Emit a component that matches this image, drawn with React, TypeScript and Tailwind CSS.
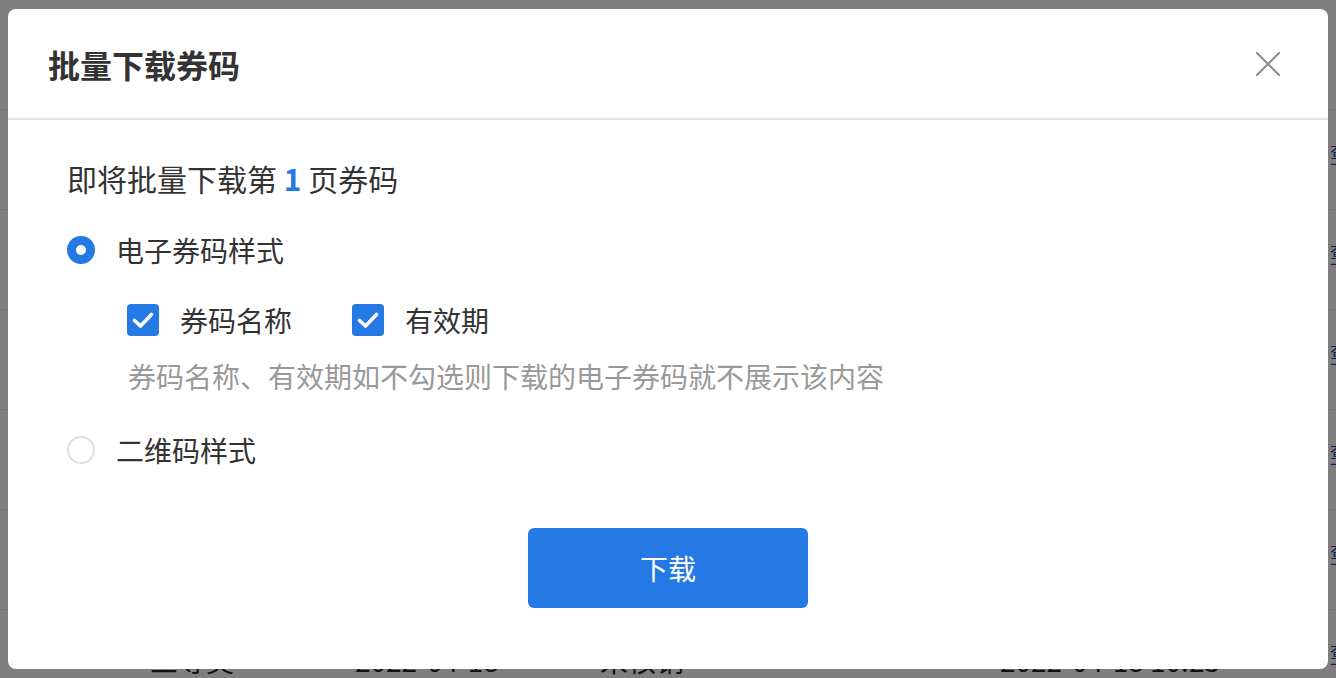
import React from "react";

const font = { fontFamily: '"Noto Sans CJK SC", "Noto Sans", sans-serif' };

function Row({ a, b, c, d }: { a: string; b: string; c: string; d: string }) {
  return (
    <div className="h-[100px] border-b border-[#e8e8e8] flex items-center text-[28px] text-[#222] whitespace-nowrap">
      <div className="w-[150px] shrink-0" />
      <div className="w-[205px] shrink-0">{a}</div>
      <div className="w-[245px] shrink-0">{b}</div>
      <div className="w-[400px] shrink-0">{c}</div>
      <div className="w-[330px] shrink-0">{d}</div>
      <div className="flex flex-col text-[#1f4fa0] text-[16px] leading-[18px] shrink-0">
        <span>查看</span>
        <span>下载</span>
      </div>
    </div>
  );
}

function Radio({ checked }: { checked: boolean }) {
  return checked ? (
    <div className="w-[28px] h-[28px] rounded-full bg-[#2579e4] flex items-center justify-center">
      <div className="w-[10px] h-[10px] rounded-full bg-white" />
    </div>
  ) : (
    <div className="w-[28px] h-[28px] rounded-full border-2 border-[#dcdfe6] bg-white" />
  );
}

function Checkbox() {
  return (
    <div className="w-[32px] h-[32px] rounded-[4px] bg-[#2579e4] flex items-center justify-center">
      <svg width="24" height="24" viewBox="0 0 24 24" fill="none">
        <path d="M3.5 12.5 L9.5 18 L20.5 6.5" stroke="white" strokeWidth="3.6" strokeLinecap="round" strokeLinejoin="round" />
      </svg>
    </div>
  );
}

export default function App() {
  return (
    <div className="relative w-[1336px] h-[678px] overflow-hidden bg-white" style={font}>
      <div className="flex flex-col">
        <div className="h-[110px] border-b border-[#e8e8e8]" />
        <Row a="一等奖" b="2022-04-18" c="未核销" d="2022-04-18 10:23" />
        <Row a="二等奖" b="2022-04-18" c="未核销" d="2022-04-18 10:23" />
        <Row a="二等奖" b="2022-04-18" c="未核销" d="2022-04-18 10:23" />
        <Row a="三等奖" b="2022-04-18" c="未核销" d="2022-04-18 10:23" />
        <Row a="三等奖" b="2022-04-18" c="未核销" d="2022-04-18 10:23" />
        <Row a="三等奖" b="2022-04-18" c="未核销" d="2022-04-18 10:23" />
      </div>
      <div className="absolute inset-0 bg-black/50 flex items-center justify-center">
        <div className="w-[1320px] h-[660px] bg-white rounded-[8px] flex flex-col">
          <div className="h-[111px] flex items-center justify-between pl-[40px] pr-[48px] border-b-2 border-[#e6e6e6] shrink-0">
            <span className="text-[32px] font-semibold text-[#333] leading-none">批量下载券码</span>
            <svg width="24" height="24" viewBox="0 0 24 24" fill="none">
              <path d="M1 1 L23 23 M23 1 L1 23" stroke="#8e8e93" strokeWidth="2.2" strokeLinecap="round" />
            </svg>
          </div>
          <div className="flex flex-col pl-[59px] pt-[38px]">
            <div className="h-[40px] flex items-center text-[30px] text-[#333]">
              即将批量下载第&nbsp;<span className="text-[#2579e4] font-bold">1</span>&nbsp;页券码
            </div>
            <div className="h-[40px] mt-[32px] flex items-center">
              <Radio checked />
              <span className="ml-[21px] text-[28px] text-[#333]">电子券码样式</span>
            </div>
            <div className="h-[40px] mt-[30px] flex items-center pl-[60px]">
              <Checkbox />
              <span className="ml-[21px] text-[28px] text-[#333]">券码名称</span>
              <div className="ml-[60px]">
                <Checkbox />
              </div>
              <span className="ml-[21px] text-[28px] text-[#333]">有效期</span>
            </div>
            <div className="h-[40px] mt-[16px] flex items-center pl-[61px] text-[28px] text-[#999]">
              券码名称、有效期如不勾选则下载的电子券码就不展示该内容
            </div>
            <div className="h-[40px] mt-[34px] flex items-center">
              <Radio checked={false} />
              <span className="ml-[21px] text-[28px] text-[#333]">二维码样式</span>
            </div>
          </div>
          <div className="flex justify-center mt-[58px]">
            <button className="w-[280px] h-[80px] rounded-[6px] bg-[#2579e4] text-white text-[28px] flex items-center justify-center">
              下载
            </button>
          </div>
        </div>
      </div>
    </div>
  );
}
